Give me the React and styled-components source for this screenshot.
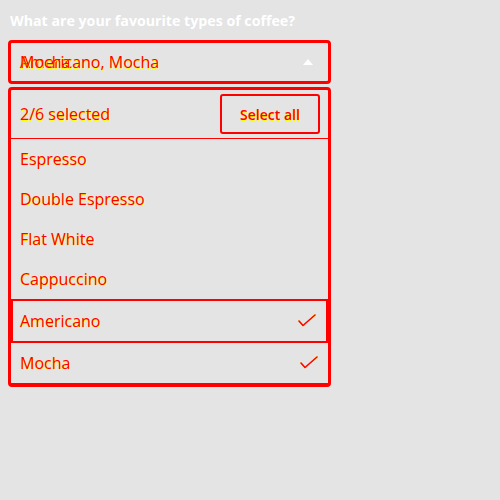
import { useState } from "react";
import styled, { createGlobalStyle, css } from "styled-components";

const RED = "#ff0000";
const YELLOW = "#ffff00";

const GlobalStyle = createGlobalStyle`
  html, body {
    margin: 0;
    background: #e4e4e4;
  }
  body {
    padding: 8px;
    font-family: "Open Sans", "DejaVu Sans", sans-serif;
  }
`;

const glowText = css`
  color: ${RED};
  text-shadow: 0.5px 0.5px 0 ${YELLOW};
`;

const Wrapper = styled.div`
  width: 323px;
  display: flex;
  flex-direction: column;
`;

const Question = styled.h2`
  margin: 0 0 8px;
  padding: 2px 0 0 2px;
  height: 22px;
  line-height: 22px;
  font-size: 14.2px;
  font-weight: 700;
  color: #ffffff;
  white-space: nowrap;
`;

const SelectBox = styled.button`
  position: relative;
  box-sizing: border-box;
  height: 44px;
  width: 100%;
  padding: 0 15px 0 9px;
  display: flex;
  align-items: center;
  justify-content: space-between;
  background: transparent;
  border: 3px solid ${RED};
  border-radius: 4px;
  font-family: inherit;
  font-size: 16px;
  cursor: pointer;
`;

const ValueText = styled.span`
  ${glowText}
`;

const GhostValue = styled.span`
  position: absolute;
  left: 9px;
  top: 50%;
  transform: translateY(-50%);
  ${glowText}
`;

const Panel = styled.div`
  box-sizing: border-box;
  margin-top: 3px;
  border: 3px solid ${RED};
  border-bottom-width: 4px;
  border-radius: 4px;
  display: flex;
  flex-direction: column;
`;

const Header = styled.div`
  display: flex;
  align-items: center;
  justify-content: space-between;
  padding: 4px 8px 4px 9px;
  border-bottom: 1.5px solid ${RED};
  font-size: 16px;
`;

const Count = styled.span`
  ${glowText}
`;

const SelectAll = styled.button`
  box-sizing: border-box;
  width: 100px;
  height: 40px;
  background: transparent;
  border: 2px solid ${RED};
  border-radius: 3px;
  font-family: inherit;
  font-size: 14px;
  font-weight: 600;
  ${glowText}
`;

const Option = styled.div`
  box-sizing: border-box;
  height: ${(p) => (p.$focused ? 44 : 40)}px;
  padding: 0 10px 0 ${(p) => (p.$focused ? 7 : 9)}px;
  display: flex;
  align-items: center;
  justify-content: space-between;
  font-size: 16px;
  border: ${(p) => (p.$focused ? `2px solid ${RED}` : "none")};
  ${glowText}
`;

const Check = () => (
  <svg width="18" height="14" viewBox="0 0 18 14" fill="none">
    <polyline
      points="1,7 5,11.5 17,1"
      stroke={RED}
      strokeWidth="1.6"
      strokeLinecap="round"
      strokeLinejoin="round"
      style={{ filter: "drop-shadow(0.6px 0.6px 0 #ffff00)" }}
    />
  </svg>
);

const Arrow = () => (
  <svg width="10" height="6" viewBox="0 0 10 6">
    <polygon points="0,6 5,0 10,6" fill="#ffffff" />
  </svg>
);

const coffees = [
  "Espresso",
  "Double Espresso",
  "Flat White",
  "Cappuccino",
  "Americano",
  "Mocha",
];

export default function App() {
  const [selected] = useState(["Americano", "Mocha"]);

  return (
    <>
      <GlobalStyle />
      <Wrapper>
        <Question>What are your favourite types of coffee?</Question>
        <SelectBox>
          <ValueText>{selected.join(", ")}</ValueText>
          <GhostValue>Mocha</GhostValue>
          <Arrow />
        </SelectBox>
        <Panel>
          <Header>
            <Count>
              {selected.length}/{coffees.length} selected
            </Count>
            <SelectAll>Select all</SelectAll>
          </Header>
          {coffees.map((c) => (
            <Option key={c} $focused={c === "Americano"}>
              <span>{c}</span>
              {selected.includes(c) && <Check />}
            </Option>
          ))}
        </Panel>
      </Wrapper>
    </>
  );
}
